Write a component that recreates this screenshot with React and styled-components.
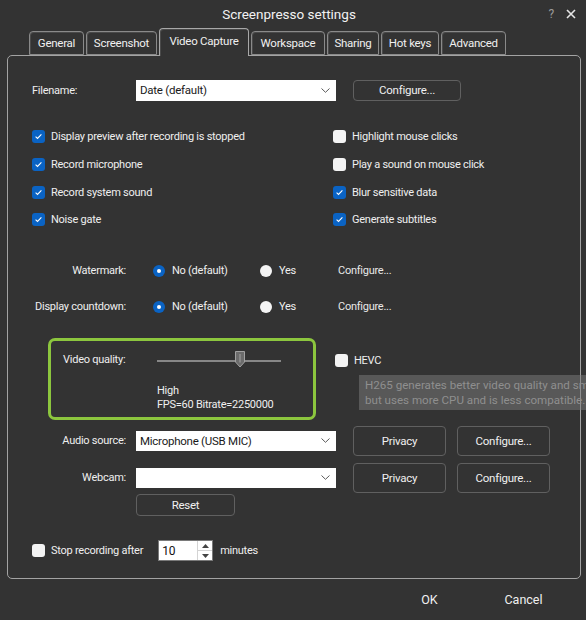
import React from 'react';
import styled, { createGlobalStyle } from 'styled-components';

const GlobalStyle = createGlobalStyle`
  html, body {
    margin: 0;
    padding: 0;
    background: #333333;
  }
  body {
    font-family: Roboto, "Liberation Sans", sans-serif;
    font-size: 11px;
    letter-spacing: -0.25px;
    color: #efefef;
  }
  * {
    box-sizing: border-box;
  }
`;

const TABS = [
  { label: 'General', w: 55 },
  { label: 'Screenshot', w: 71 },
  { label: 'Video Capture', w: 90, active: true },
  { label: 'Workspace', w: 74 },
  { label: 'Sharing', w: 52 },
  { label: 'Hot keys', w: 58 },
  { label: 'Advanced', w: 65 },
];

const OPTIONS = [
  { label: 'Display preview after recording is stopped', on: true },
  { label: 'Highlight mouse clicks', on: false },
  { label: 'Record microphone', on: true },
  { label: 'Play a sound on mouse click', on: false },
  { label: 'Record system sound', on: true },
  { label: 'Blur sensitive data', on: true },
  { label: 'Noise gate', on: true },
  { label: 'Generate subtitles', on: true },
];

const TRACK_W = 124;
const THUMB_W = 10;
const QUALITY = 0.684;

const Window = styled.div`
  width: 586px;
  height: 620px;
  background: #333333;
  display: flex;
  flex-direction: column;
  overflow: hidden;
`;

const TitleBar = styled.div`
  height: 28px;
  display: grid;
  grid-template-columns: 1fr auto 1fr;
  align-items: center;
`;

const Title = styled.div`
  grid-column: 2;
  font-size: 13.5px;
  letter-spacing: 0;
  color: #f2f2f2;
  padding-right: 8px;
`;

const TitleControls = styled.div`
  display: flex;
  justify-content: flex-end;
  align-items: center;
  gap: 12px;
  padding-right: 10px;
`;

const HelpMark = styled.span`
  font-size: 12px;
  color: #9a9a9a;
`;

const TabStrip = styled.div`
  height: 28px;
  display: flex;
  align-items: flex-end;
  gap: 2px;
  padding-left: 29px;
  margin-bottom: -1px;
  position: relative;
  z-index: 1;
`;

const Tab = styled.div`
  width: ${p => p.$w}px;
  height: ${p => (p.$active ? 28 : 24)}px;
  margin-bottom: ${p => (p.$active ? 0 : 1)}px;
  display: flex;
  align-items: center;
  justify-content: center;
  padding-bottom: ${p => (p.$active ? 3 : 0)}px;
  border: 1px solid ${p => (p.$active ? '#a8a8a8' : '#8a8a8a')};
  border-bottom: ${p => (p.$active ? 'none' : '1px solid #8a8a8a')};
  border-radius: 4px 4px 0 0;
  background: #333333;
  box-shadow: inset 1px 1px 0 #4a4a4a;
  font-size: 11.5px;
  color: #f0f0f0;
`;

const Panel = styled.div`
  margin-left: 7px;
  width: 574px;
  height: 524px;
  border: 1px solid #a3a3a3;
  border-radius: 5px;
  padding-left: 24px;
  display: flex;
  flex-direction: column;
  align-items: flex-start;
`;

const Row = styled.div`
  display: flex;
  align-items: center;
  height: ${p => p.$h ?? 22}px;
  margin-top: ${p => p.$top ?? 0}px;
`;

const FieldLabel = styled.div`
  width: ${p => p.$w ?? 94}px;
  margin-right: ${p => p.$gap ?? 10}px;
  text-align: ${p => (p.$left ? 'left' : 'right')};
  white-space: nowrap;
`;

const Select = styled.div`
  width: 200px;
  height: ${p => p.$h ?? 20}px;
  background: #ffffff;
  color: #1a1a1a;
  font-size: 11.5px;
  display: flex;
  align-items: center;
  justify-content: space-between;
  padding: 0 6px 0 4px;
`;

const Button = styled.div`
  width: ${p => p.$w}px;
  height: ${p => p.$h}px;
  margin-left: ${p => p.$ml ?? 0}px;
  border: 1px solid #606060;
  border-radius: 4px;
  display: flex;
  align-items: center;
  justify-content: center;
  color: #f0f0f0;
  font-size: 11.5px;
`;

const CheckGrid = styled.div`
  margin-top: 22px;
  display: grid;
  grid-template-columns: 301px 220px;
  grid-auto-rows: 27.7px;
  align-items: center;
`;

const CheckItem = styled.div`
  display: flex;
  align-items: center;
  gap: 6px;
  white-space: nowrap;
`;

const Box = styled.span`
  width: 13px;
  height: 13px;
  flex: none;
  border-radius: 3px;
  background: ${p => (p.$on ? '#0a63c4' : '#f4f4f4')};
  display: flex;
  align-items: center;
  justify-content: center;
`;

const RadioOption = styled.div`
  width: ${p => p.$w}px;
  display: flex;
  align-items: center;
  gap: 7px;
`;

const RadioDot = styled.span`
  width: 12px;
  height: 12px;
  flex: none;
  border-radius: 50%;
  background: ${p => (p.$on ? '#0a63c4' : '#f4f4f4')};
  display: flex;
  align-items: center;
  justify-content: center;

  &::after {
    content: '';
    width: 4px;
    height: 4px;
    border-radius: 50%;
    background: ${p => (p.$on ? '#ffffff' : 'transparent')};
  }
`;

const LinkText = styled.span`
  color: #e8e8e8;
`;

const VideoRow = styled.div`
  margin-top: 19px;
  margin-left: 16px;
  display: flex;
  align-items: flex-start;
`;

const QualityBox = styled.div`
  width: 268px;
  height: 82px;
  border: 3px solid #8cc63e;
  border-radius: 7px;
  padding: 9px 12px 0;
  display: grid;
  grid-template-columns: 94px ${TRACK_W}px;
  grid-template-rows: 20px auto;
  row-gap: 9px;
  align-items: center;
`;

const Slider = styled.div`
  position: relative;
  height: 20px;
  display: flex;
  align-items: center;
`;

const Track = styled.div`
  width: 100%;
  height: 2px;
  margin-top: 3px;
  background: #878787;
`;

const Thumb = styled.svg`
  position: absolute;
  top: 1px;
`;

const QualityInfo = styled.div`
  grid-column: 2;
  line-height: 14px;
  white-space: nowrap;
`;

const HevcWrap = styled.div`
  position: relative;
  margin-left: 19px;
  margin-top: 16px;
`;

const Tooltip = styled.div`
  position: absolute;
  left: 24px;
  top: 21px;
  width: 250px;
  height: 35px;
  padding: 3px 0 0 6px;
  background: rgba(125, 125, 125, 0.5);
  color: #8f8f8f;
  font-size: 11.6px;
  letter-spacing: 0;
  line-height: 15px;
  white-space: nowrap;
  overflow: hidden;
`;

const SpinBox = styled.div`
  width: 55px;
  height: 21px;
  margin: 0 7px 0 15px;
  background: #ffffff;
  border: 1px solid #7a7a7a;
  display: flex;
  color: #111111;
  font-size: 12px;
`;

const SpinValue = styled.div`
  flex: 1;
  padding-left: 3px;
  display: flex;
  align-items: center;
`;

const SpinButtons = styled.div`
  width: 15px;
  display: flex;
  flex-direction: column;
  border-left: 1px solid #d4d4d4;
`;

const SpinArrow = styled.div`
  flex: 1;
  display: flex;
  align-items: center;
  justify-content: center;
  border-top: ${p => (p.$down ? '1px solid #d4d4d4' : 'none')};
`;

const Footer = styled.div`
  flex: 1;
  display: flex;
  justify-content: flex-end;
  align-items: center;
  gap: 19px;
  padding-right: 25px;
`;

const FooterButton = styled.div`
  width: 75px;
  text-align: center;
  font-size: 12.5px;
  letter-spacing: 0;
  color: #f0f0f0;
`;

const Check = ({ on }) => (
  <Box $on={on}>
    {on && (
      <svg width="9" height="9" viewBox="0 0 9 9">
        <path d="M1.6 4.7 L3.5 6.5 L7.4 2.4" fill="none" stroke="#fff" strokeWidth="1.1" />
      </svg>
    )}
  </Box>
);

const Chevron = () => (
  <svg width="9" height="5" viewBox="0 0 9 5">
    <path d="M0.5 0.5 L4.5 4.3 L8.5 0.5" fill="none" stroke="#5a5a5a" strokeWidth="1" />
  </svg>
);

const Arrow = ({ down }) => (
  <svg width="7" height="4" viewBox="0 0 7 4">
    <path d={down ? 'M0 0 H7 L3.5 4 Z' : 'M0 4 H7 L3.5 0 Z'} fill="#444" />
  </svg>
);

const RadioRow = ({ label, top }) => (
  <Row $h={24} $top={top}>
    <FieldLabel $gap={27}>{label}</FieldLabel>
    <RadioOption $w={107}>
      <RadioDot $on />
      No (default)
    </RadioOption>
    <RadioOption $w={78}>
      <RadioDot />
      Yes
    </RadioOption>
    <LinkText>Configure...</LinkText>
  </Row>
);

const SourceRow = ({ label, value, top }) => (
  <Row $h={30} $top={top}>
    <FieldLabel>{label}</FieldLabel>
    <Select>
      <span>{value}</span>
      <Chevron />
    </Select>
    <Button $w={93} $h={30} $ml={17}>Privacy</Button>
    <Button $w={93} $h={30} $ml={11}>Configure...</Button>
  </Row>
);

export default function App() {
  return (
    <Window>
      <GlobalStyle />
      <TitleBar>
        <Title>Screenpresso settings</Title>
        <TitleControls>
          <HelpMark>?</HelpMark>
          <svg width="10" height="10" viewBox="0 0 10 10">
            <path d="M1 1 L9 9 M9 1 L1 9" stroke="#e6e6e6" strokeWidth="1.6" />
          </svg>
        </TitleControls>
      </TitleBar>

      <TabStrip>
        {TABS.map(t => (
          <Tab key={t.label} $w={t.w} $active={t.active}>{t.label}</Tab>
        ))}
      </TabStrip>

      <Panel>
        <Row $top={23}>
          <FieldLabel $w={104} $gap={0} $left>Filename:</FieldLabel>
          <Select $h={21}>
            <span>Date (default)</span>
            <Chevron />
          </Select>
          <Button $w={108} $h={21} $ml={17}>Configure...</Button>
        </Row>

        <CheckGrid>
          {OPTIONS.map(o => (
            <CheckItem key={o.label}>
              <Check on={o.on} />
              {o.label}
            </CheckItem>
          ))}
        </CheckGrid>

        <RadioRow label="Watermark:" top={25} />
        <RadioRow label="Display countdown:" top={12} />

        <VideoRow>
          <QualityBox>
            <span>Video quality:</span>
            <Slider>
              <Track />
              <Thumb
                width={THUMB_W}
                height="17"
                viewBox="0 0 10 17"
                style={{ left: QUALITY * (TRACK_W - THUMB_W) }}
              >
                <path d="M0.5 0.5 H9.5 V11 L5 16 L0.5 11 Z" fill="#6c6c6c" stroke="#a2a2a2" />
                <path d="M5 3 V11.5" stroke="#a2a2a2" />
              </Thumb>
            </Slider>
            <QualityInfo>
              High
              <br />
              FPS=60 Bitrate=2250000
            </QualityInfo>
          </QualityBox>
          <HevcWrap>
            <CheckItem>
              <Check on={false} />
              HEVC
            </CheckItem>
            <Tooltip>
              H265 generates better video quality and smaller files,
              <br />
              but uses more CPU and is less compatible.
            </Tooltip>
          </HevcWrap>
        </VideoRow>

        <SourceRow label="Audio source:" value="Microphone (USB MIC)" top={6} />
        <SourceRow label="Webcam:" value="" top={7} />

        <Row $top={1}>
          <FieldLabel $w={104} $gap={0} />
          <Button $w={99} $h={22}>Reset</Button>
        </Row>

        <Row $top={24}>
          <CheckItem>
            <Check on={false} />
            Stop recording after
          </CheckItem>
          <SpinBox>
            <SpinValue>10</SpinValue>
            <SpinButtons>
              <SpinArrow><Arrow /></SpinArrow>
              <SpinArrow $down><Arrow down /></SpinArrow>
            </SpinButtons>
          </SpinBox>
          minutes
        </Row>
      </Panel>

      <Footer>
        <FooterButton>OK</FooterButton>
        <FooterButton>Cancel</FooterButton>
      </Footer>
    </Window>
  );
}
